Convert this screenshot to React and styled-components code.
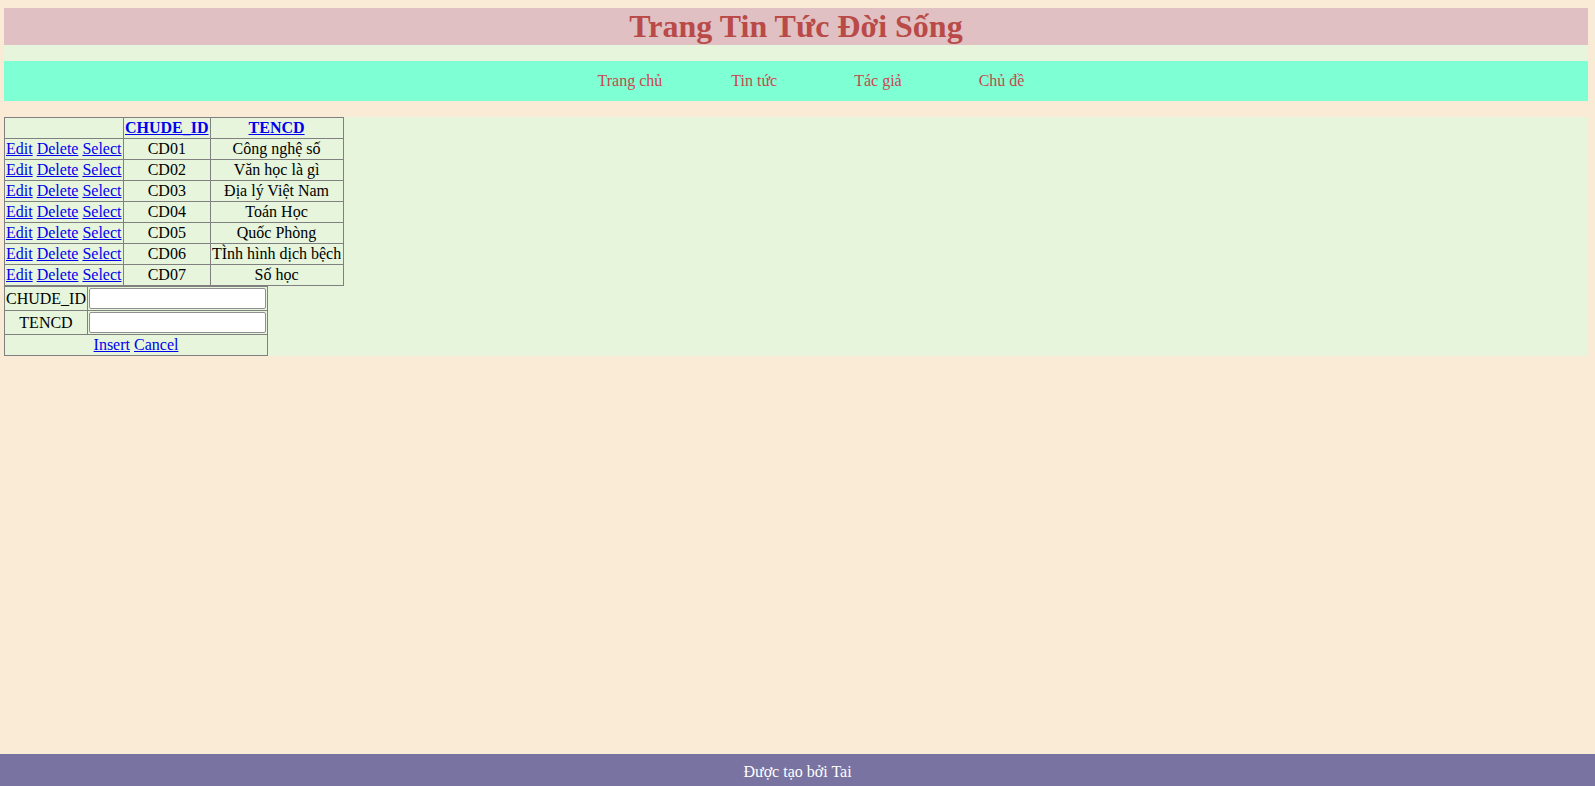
import styled, { createGlobalStyle } from "styled-components";

const GlobalStyle = createGlobalStyle`
  html, body {
    margin: 0;
    padding: 0;
    background: #faebd7;
    font-family: "Liberation Serif", "Times New Roman", serif;
    font-size: 16px;
  }
`;

const topics = [
  ["CD01", "Công nghệ số"],
  ["CD02", "Văn học là gì"],
  ["CD03", "Địa lý Việt Nam"],
  ["CD04", "Toán Học"],
  ["CD05", "Quốc Phòng"],
  ["CD06", "TÌnh hình dịch bệch"],
  ["CD07", "Số học"],
];

const menu = [
  { label: "Trang chủ", gap: 0 },
  { label: "Tin tức", gap: 69 },
  { label: "Tác giả", gap: 77 },
  { label: "Chủ đề", gap: 77 },
];

const App = () => {
  return (
    <Page>
      <GlobalStyle />
      <Main>
        <HeaderStyled>
          <h1>Trang Tin Tức Đời Sống</h1>
        </HeaderStyled>

        <Nav>
          {menu.map((m) => (
            <NavItem key={m.label} href="#" $gap={m.gap}>
              {m.label}
            </NavItem>
          ))}
        </Nav>

        <Content>
          <Grid>
            <tbody>
              <tr>
                <th className="actions">&nbsp;</th>
                <th>
                  <a href="#">CHUDE_ID</a>
                </th>
                <th className="name">
                  <a href="#">TENCD</a>
                </th>
              </tr>
              {topics.map(([id, name]) => (
                <tr key={id}>
                  <td className="actions">
                    <a href="#">Edit</a> <a href="#">Delete</a>{" "}
                    <a href="#">Select</a>
                  </td>
                  <td>{id}</td>
                  <td className="name">{name}</td>
                </tr>
              ))}
            </tbody>
          </Grid>

          <Form>
            <tbody>
              <tr>
                <td>CHUDE_ID</td>
                <td>
                  <input type="text" />
                </td>
              </tr>
              <tr>
                <td>TENCD</td>
                <td>
                  <input type="text" />
                </td>
              </tr>
              <tr>
                <td colSpan={2}>
                  <a href="#">Insert</a> <a href="#">Cancel</a>
                </td>
              </tr>
            </tbody>
          </Form>
        </Content>
      </Main>

      <Footer>Được tạo bởi Tai</Footer>
    </Page>
  );
};

const Page = styled.div`
  min-height: 100vh;
  display: flex;
  flex-direction: column;
`;

const Main = styled.div`
  padding: 8px 7px 0 4px;
`;

const HeaderStyled = styled.header`
  background: #e6f5dc;
  padding-bottom: 16px;

  h1 {
    margin: 0;
    height: 37px;
    line-height: 37px;
    background: #e0c0c2;
    color: #b94a48;
    font-size: 32px;
    font-weight: bold;
    text-align: center;
  }
`;

const Nav = styled.nav`
  display: flex;
  justify-content: center;
  align-items: center;
  height: 40px;
  background: #7fffd4;
  padding-left: 30px;
`;

const NavItem = styled.a`
  margin-left: ${(p) => p.$gap}px;
  color: #c9474f;
  text-decoration: none;
  font-size: 16px;
`;

const Content = styled.section`
  margin-top: 16px;
  background: #e6f5dc;
  min-height: 239px;

  table {
    border-collapse: collapse;
    font-size: 16px;
  }

  td,
  th {
    border: 1px solid #808080;
    padding: 1px;
    text-align: center;
    white-space: nowrap;
  }

  a {
    color: #0000ee;
  }
`;

const Grid = styled.table`
  th a {
    font-weight: bold;
  }

  .actions {
    text-align: left;
    min-width: 116px;
  }

  .name {
    min-width: 130px;
  }
`;

const Form = styled.table`
  input {
    box-sizing: border-box;
    width: 177px;
    height: 21px;
    padding: 1px 2px;
    border: 1px solid #8f8f8f;
    border-radius: 2px;
    font-size: 13px;
    margin: 0;
    background: #fff;
    vertical-align: middle;
  }
`;

const Footer = styled.footer`
  margin-top: auto;
  height: 32px;
  box-sizing: border-box;
  padding-top: 3px;
  line-height: 29px;
  background: #7873a0;
  color: #fff;
  text-align: center;
  font-size: 16px;
`;

export default App;
